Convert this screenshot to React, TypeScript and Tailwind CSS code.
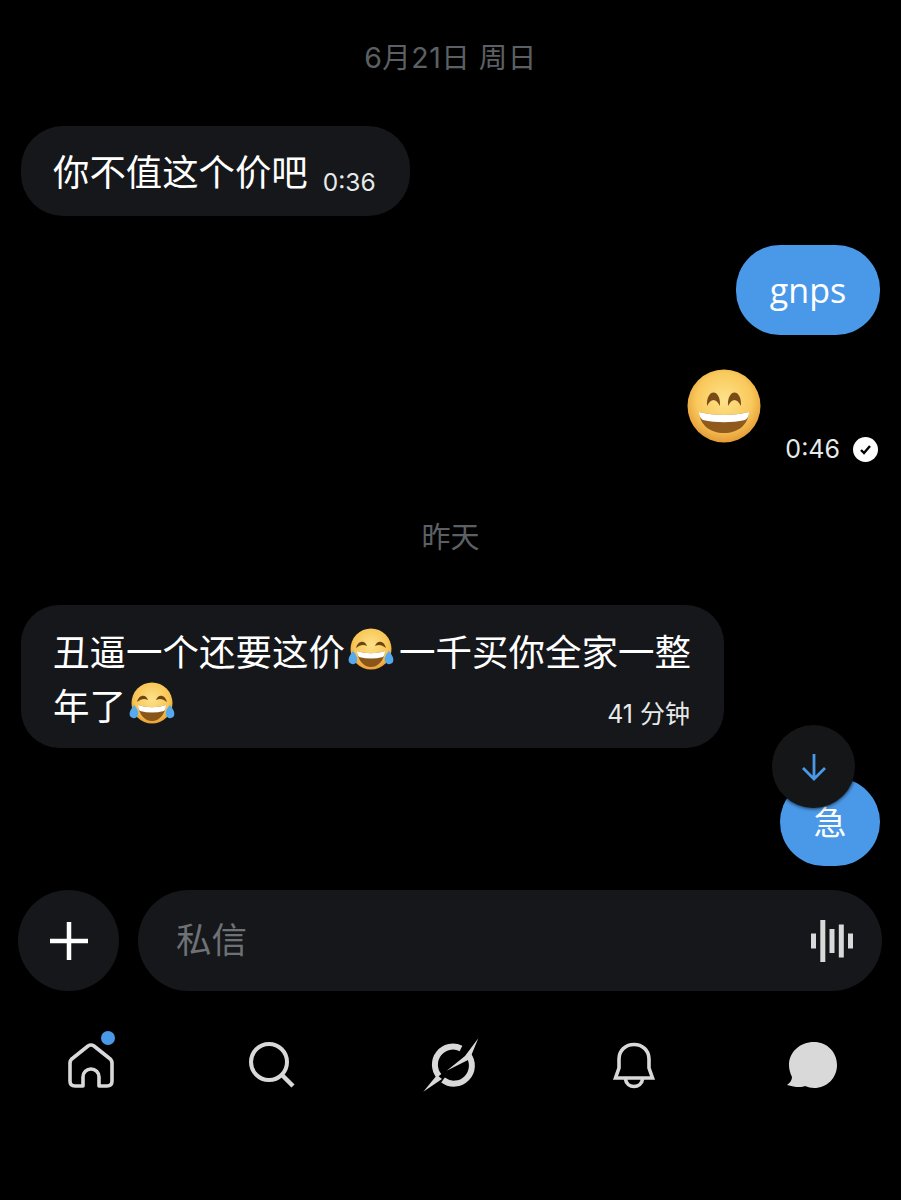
const CJK = "font-['Inter','Noto_Sans_CJK_SC',sans-serif]";

function Smile({ className }: { className: string }) {
  return (
    <svg viewBox="0 0 76 76" className={className}>
      <defs>
        <radialGradient id="sf" cx="50%" cy="42%" r="58%">
          <stop offset="0%" stopColor="#fde28a" />
          <stop offset="65%" stopColor="#f9c95c" />
          <stop offset="100%" stopColor="#e59a35" />
        </radialGradient>
      </defs>
      <circle cx="38" cy="37" r="36.5" fill="url(#sf)" />
      <path d="M21 37 C20 19 35 19 34 37 C30 29 25 29 21 37Z" fill="#7a4a17" />
      <path d="M42 37 C41 19 56 19 55 37 C51 29 46 29 42 37Z" fill="#7a4a17" />
      <path d="M13 43 C28 47 48 47 63 43 C62 56 52 64 38 64 C24 64 14 56 13 43Z" fill="#8f5a1c" />
      <path d="M13 43 C28 47 48 47 63 43 C63 47 62 49 59 51 C46 54 30 54 17 51 C14 49 13 47 13 43Z" fill="#fff" />
    </svg>
  );
}

function Laugh({ id }: { id: string }) {
  return (
    <svg viewBox="0 0 46 46" className="ml-[3px] mr-[5px] inline-block h-[46px] w-[46px] align-[-7px]">
      <defs>
        <radialGradient id={id} cx="50%" cy="40%" r="60%">
          <stop offset="0%" stopColor="#fde28a" />
          <stop offset="70%" stopColor="#f8c654" />
          <stop offset="100%" stopColor="#e89f38" />
        </radialGradient>
      </defs>
      <circle cx="23" cy="22" r="20.5" fill={`url(#${id})`} />
      <path d="M8 21 C10 13 17 13 19 19 C15 17 12 18 8 21Z" fill="#6d4316" />
      <path d="M38 21 C36 13 29 13 27 19 C31 17 34 18 38 21Z" fill="#6d4316" />
      <path d="M9 24 C18 27 28 27 37 24 C36 34 30 40 23 40 C16 40 10 34 9 24Z" fill="#8a5519" />
      <path d="M9 24 C18 27 28 27 37 24 C37 27 36 29 35 30 C27 32 19 32 11 30 C10 29 9 27 9 24Z" fill="#fff" />
      <path d="M5 24 C1 29 0 32 1 35 C3 38 8 38 9 34 C10 31 8 27 5 24Z" fill="#55a9ec" />
      <path d="M41 24 C45 29 46 32 45 35 C43 38 38 38 37 34 C36 31 38 27 41 24Z" fill="#55a9ec" />
    </svg>
  );
}

function HomeIcon() {
  return (
    <svg viewBox="0 0 48 48" className="h-12 w-12" fill="none" stroke="#d9d9d9" strokeWidth="3.6" strokeLinejoin="round">
      <path d="M16 45 V36 a8 8 0 0 1 16 0 V45 H40 Q45 45 45 40 V22 Q45 19 42 17 L27 5 Q24 3 21 5 L6 17 Q3 19 3 22 V40 Q3 45 8 45Z" />
    </svg>
  );
}

function SearchIcon() {
  return (
    <svg viewBox="0 0 48 48" className="h-12 w-12" fill="none" stroke="#d9d9d9" strokeWidth="4">
      <circle cx="21" cy="21" r="18" />
      <path d="M33 33 L45 45" strokeWidth="4.5" />
    </svg>
  );
}

function ExploreIcon() {
  return (
    <svg viewBox="0 0 75 70" className="h-[70px] w-[75px]" fill="none">
      <path d="M46 18.5 A18 18 0 0 0 24 46" stroke="#d9d9d9" strokeWidth="6" />
      <path d="M53 24.5 A18 18 0 0 1 28 50" stroke="#d9d9d9" strokeWidth="6" />
      <path d="M8.3 61.7 L22 45 L27 49Z" fill="#d9d9d9" />
      <path d="M63.3 8.3 L50 26 L31.7 40.7 L53 30 L56 26Z" fill="#d9d9d9" />
    </svg>
  );
}

function BellIcon() {
  return (
    <svg viewBox="0 0 44 48" className="h-12 w-11" fill="none" stroke="#d9d9d9" strokeWidth="3.6">
      <path d="M3.5 37 H40.5 L37 27 V18 C37 9 30 3.5 22 3.5 C14 3.5 7 9 7 18 V27 Z" />
      <path d="M13.5 38 C14 43 18 45.5 22 45.5 C26 45.5 30 43 30.5 38" />
    </svg>
  );
}

function ChatIcon() {
  return (
    <svg viewBox="0 0 52 48" className="mr-[5px] h-12 w-[52px]">
      <path d="M28 1 C41 1 51 11 51 24 C51 37 41 47 28 47 C25 47 22 46 19 45 C15 47 8 46 1 44 C4 42 6 39 6 36 C4 32 3 28 3 24 C3 11 14 1 28 1Z" fill="#d9d9d9" />
    </svg>
  );
}

export default function App() {
  return (
    <div className={`relative flex h-[1200px] w-[901px] flex-col overflow-hidden bg-black text-white ${CJK}`}>
      <div className="mt-[41px] h-[34px] text-center text-[28.5px] leading-[34px] tracking-[0.5px] text-[#5c6064]">
        6月21日 周日
      </div>

      <div className="mt-[51px] ml-[21px] flex h-[90px] w-[389px] items-center rounded-[42px] bg-[#15171a] pl-8">
        <span className="mt-[3px] text-[36.4px] leading-[54px]">你不值这个价吧</span>
        <span className="ml-[15px] mt-[22px] text-[24.5px] leading-[32px] text-[#e7e9ea]">0:36</span>
      </div>

      <div className="mt-[29px] mr-[21px] flex h-[90px] w-[144px] items-center justify-center self-end rounded-[44px] bg-[#4a99e9] font-['Open_Sans',sans-serif] text-[34px] font-normal">
        gnps
      </div>

      <div className="mt-[34px] mr-[139px] self-end">
        <Smile className="block h-[76px] w-[76px]" />
      </div>
      <div className="-mt-[11px] mr-[23px] flex h-[30px] items-center gap-[13px] self-end">
        <span className="text-[25px] leading-[30px] text-[#e7e9ea]">0:46</span>
        <span className="flex h-[25px] w-[25px] items-center justify-center rounded-full bg-white">
          <svg viewBox="0 0 25 25" className="h-[25px] w-[25px]" fill="none" stroke="#000" strokeWidth="2.4">
            <path d="M8 13 L11 16 L17 9" />
          </svg>
        </span>
      </div>

      <div className="mt-[55px] h-[38px] text-center text-[29px] leading-[38px] text-[#5c6064]">昨天</div>

      <div className="mt-[48px] ml-[21px] h-[143px] w-[703px] rounded-[38px] bg-[#15171a] pl-8 pr-8 pt-[20px]">
        <div className="mt-[1px] whitespace-nowrap text-[36.5px] leading-[54px]">
          丑逼一个还要这价<Laugh id="l1" />一千买你全家一整
        </div>
        <div className="flex items-center justify-between text-[36.5px] leading-[54px]">
          <span>
            年了<Laugh id="l2" />
          </span>
          <span className="mr-[2px] mt-[14px] text-[25px] leading-[32px] text-[#e7e9ea]">41 分钟</span>
        </div>
      </div>

      <div className="mt-[30px] mr-[21px] flex h-[88px] w-[100px] items-center justify-center self-end rounded-full bg-[#4a99e9] pt-[4px] text-[33px]">
        急
      </div>

      <div className="mt-[24px] flex items-stretch gap-[19px] pl-[18px] pr-[19px]">
        <div className="flex h-[101px] w-[101px] items-center justify-center rounded-full bg-[#15171a]">
          <svg viewBox="0 0 38 38" className="h-[38px] w-[38px]" stroke="#fff" strokeWidth="4.5">
            <path d="M19 0 V38 M0 19 H38" />
          </svg>
        </div>
        <div className="flex h-[101px] flex-1 items-center justify-between rounded-full bg-[#15171a] pl-[38px] pr-[29px]">
          <span className="text-[35.5px] text-[#6e7175]">私信</span>
          <svg viewBox="0 0 42 42" className="h-[42px] w-[42px]" fill="#d9d9d9">
            <rect x="0" y="13.5" width="5" height="15" />
            <rect x="9.3" y="0" width="5" height="42" />
            <rect x="18.5" y="9" width="5" height="24" />
            <rect x="27.8" y="4.5" width="5" height="33" />
            <rect x="37" y="13.5" width="5" height="15" />
          </svg>
        </div>
      </div>

      <div className="mt-[39px] grid grid-cols-[repeat(5,181px)] items-center">
        <div className="relative flex justify-center">
          <HomeIcon />
          <span className="absolute left-[101px] top-[-10px] h-[14px] w-[14px] rounded-full bg-[#4a99e9]" />
        </div>
        <div className="flex justify-center"><SearchIcon /></div>
        <div className="flex justify-center"><ExploreIcon /></div>
        <div className="flex justify-center"><BellIcon /></div>
        <div className="flex justify-center"><ChatIcon /></div>
      </div>

      <div className="absolute left-[772px] top-[725px] flex h-[83px] w-[83px] items-center justify-center rounded-full bg-[#151618] shadow-[0_0_4px_#000]">
        <svg viewBox="0 0 26 30" className="h-[30px] w-[26px]" fill="none" stroke="#4a99e9" strokeWidth="2.8">
          <path d="M13 2 V27 M2 16 L13 27 L24 16" />
        </svg>
      </div>
    </div>
  );
}
